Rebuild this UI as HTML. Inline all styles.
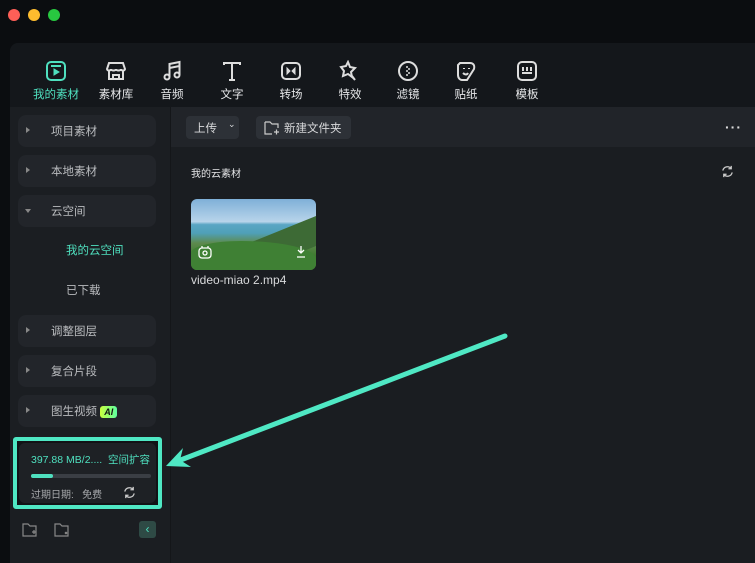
<!DOCTYPE html><html><head><meta charset="utf-8"><style>
*{margin:0;padding:0;box-sizing:border-box}
body{width:755px;height:546px;overflow:hidden;background:#0b0d10;font-family:"Liberation Sans","Noto Sans CJK SC",sans-serif;position:relative;color:#c8cacd}
.dot{position:absolute;top:9px;width:12px;height:12px;border-radius:50%}
.panel{position:absolute;left:10px;top:43px;width:760px;height:520px;background:#16191d;border-radius:8px 0 0 0;overflow:hidden}
.tb{position:absolute;top:0;left:0;right:0;height:64px;background:#14171b}
.tab{position:absolute;top:17px;width:50px;text-align:center;font-size:11.5px;color:#e6e7e9}
.tab svg{display:block;margin:0 auto 4px;width:22px;height:22px}
.side{position:absolute;left:0;top:64px;width:160px;bottom:0;background:#1b1e22}
.item{position:absolute;left:8px;width:138px;height:32px;background:#22252a;border-radius:8px;font-size:11.5px;color:#b9bbbe}
.item span{position:absolute;left:33px;top:8px}
.item i{position:absolute;left:8px;top:12px;border-left:4px solid #888;border-top:3px solid transparent;border-bottom:3px solid transparent}
.main{position:absolute;left:160px;top:64px;right:0;bottom:0;background:#1a1d21;border-left:1px solid #141619}
.bar{position:absolute;top:0;left:0;right:0;height:40px;background:#212429}
.btn{position:absolute;top:9px;height:23px;background:#2d3137;border-radius:4px;font-size:11.5px;color:#d8d9db}
</style></head><body>
<div class="dot" style="left:8px;background:#fe5f57"></div>
<div class="dot" style="left:28px;background:#febc2e"></div>
<div class="dot" style="left:48px;background:#28c840"></div>
<div class="panel">
<div class="tb">
<div class="tab" style="left:21px;color:#4fe0bf"><svg viewBox="0 0 22 22" fill="none" stroke="#4fe0bf" stroke-width="2"><rect x="2" y="2" width="18" height="18" rx="4"/><path d="M6 6h10"/><path d="M9 9v6l5-3z" fill="#4fe0bf" stroke-width="1"/></svg>我的素材</div>
<div class="tab" style="left:81px"><svg viewBox="0 0 22 22" fill="none" stroke="#ddd" stroke-width="2"><path d="M4 3h14l2 6c0 2-4 2-4 0 0 2-5 2-5 0 0 2-5 2-5 0 0 2-4 2-4 0z"/><path d="M4 11v8h14v-8M8 19v-4h6v4"/></svg>素材库</div>
<div class="tab" style="left:137px"><svg viewBox="0 0 22 22" fill="none" stroke="#ddd" stroke-width="2"><circle cx="6" cy="17" r="2.5"/><circle cx="16" cy="15" r="2.5"/><path d="M8.5 17V4l10-2v13M8.5 8l10-2"/></svg>音频</div>
<div class="tab" style="left:197px"><svg viewBox="0 0 22 22" fill="none" stroke="#ddd" stroke-width="2"><path d="M3 5V3h16v2M11 3v17M8 20h6"/></svg>文字</div>
<div class="tab" style="left:256px"><svg viewBox="0 0 22 22" fill="none" stroke="#ddd" stroke-width="2"><rect x="2" y="3" width="18" height="16" rx="4"/><path d="M7 8l3 3-3 3zM15 8l-3 3 3 3z" fill="#ddd" stroke-width="1"/></svg>转场</div>
<div class="tab" style="left:315px"><svg viewBox="0 0 22 22" fill="none" stroke="#ddd" stroke-width="2"><path d="M9 2l2 5 5 1-4 4 1 5-4-3-5 2 1-5-3-4 5-1z"/><path d="M13 16l3 4"/></svg>特效</div>
<div class="tab" style="left:373px"><svg viewBox="0 0 22 22" fill="none" stroke="#ddd" stroke-width="2"><circle cx="11" cy="11" r="9"/><path d="M9 7h2M11 9h2M9 11h2M11 13h2M9 15h2" stroke-width="1.5"/></svg>滤镜</div>
<div class="tab" style="left:431px"><svg viewBox="0 0 22 22" fill="none" stroke="#ddd" stroke-width="2"><path d="M5 3h10c3 0 5 2 4 6l-7 11H7c-2 0-4-2-4-5V5z"/><path d="M8 13c2 2 4 2 5 0M9 8v1M14 8v1"/></svg>贴纸</div>
<div class="tab" style="left:492px"><svg viewBox="0 0 22 22" fill="none" stroke="#ddd" stroke-width="2"><rect x="2" y="2" width="18" height="18" rx="4"/><path d="M6 13h10M7 7v4M11 7v4M15 7v4"/></svg>模板</div>
</div>
<div class="side">
<div class="item" style="top:8px"><i></i><span>项目素材</span></div>
<div class="item" style="top:48px"><i></i><span>本地素材</span></div>
<div class="item" style="top:88px"><i style="border-left:3px solid transparent;border-right:3px solid transparent;border-top:4px solid #888;border-bottom:0;left:7px;top:14px"></i><span>云空间</span></div>
<div style="position:absolute;left:56px;top:135px;font-size:11.5px;color:#4fe0bf">我的云空间</div>
<div style="position:absolute;left:56px;top:175px;font-size:11.5px;color:#b9bbbe">已下载</div>
<div class="item" style="top:208px"><i></i><span>调整图层</span></div>
<div class="item" style="top:248px"><i></i><span>复合片段</span></div>
<div class="item" style="top:288px"><i></i><span>图生视频 <b style="display:inline-block;background:linear-gradient(90deg,#c9ff3d,#5dffa0);color:#111;font-size:9px;font-style:italic;padding:0 4px;border-radius:3px;line-height:12px">AI</b></span></div>
<div style="position:absolute;left:3px;top:330px;width:149px;height:72px;border:4px solid #4fe8c4;border-radius:3px;background:#111316">
<div style="position:absolute;left:2px;top:2px;right:2px;bottom:2px;background:#1e2125;border-radius:6px"></div>
<div style="position:absolute;left:14px;top:11px;font-size:10.5px;color:#4fe0bf;white-space:nowrap">397.88 MB/2....&nbsp; 空间扩容</div>
<div style="position:absolute;left:14px;top:33px;width:120px;height:4px;background:#3a3e44;border-radius:2px"><div style="width:22px;height:4px;background:#4fe0bf;border-radius:2px"></div></div>
<div style="position:absolute;left:14px;top:45px;font-size:10px;color:#a8aaad">过期日期:&nbsp;&nbsp; 免费</div>
<svg style="position:absolute;left:106px;top:45px" width="13" height="13" viewBox="0 0 14 14" fill="none" stroke="#ccc" stroke-width="1.4"><path d="M2 6a5 5 0 0 1 9-2M12 8a5 5 0 0 1-9 2M11 1v3H8M3 13v-3h3"/></svg>
</div>
<svg style="position:absolute;left:12px;top:416px" width="16" height="14" fill="none" stroke="#888" stroke-width="1.2"><path d="M1 1h5l2 2h6v10H1z M10 9h4M12 7v4"/></svg>
<svg style="position:absolute;left:44px;top:416px" width="16" height="14" fill="none" stroke="#888" stroke-width="1.2"><path d="M1 1h5l2 2h6v10H1z M11 9l2 2M13 9l-2 2"/></svg>
<div style="position:absolute;left:129px;top:414px;width:17px;height:17px;background:#2e4a45;border-radius:3px;color:#4fe0bf;font-size:12px;text-align:center;line-height:17px">‹</div>
</div>
<div class="main">
<div class="bar">
<div class="btn" style="left:15px;width:53px"><span style="position:absolute;left:8px;top:4px">上传</span><span style="position:absolute;left:42px;top:3px;font-size:9px">⌄</span></div>
<div class="btn" style="left:85px;width:95px"><svg style="position:absolute;left:8px;top:5px" width="16" height="14" fill="none" stroke="#ccc" stroke-width="1.2"><path d="M1 1h5l2 2h6v4M8 13H1V1M10 11h5M12.5 8.5v5"/></svg><span style="position:absolute;left:28px;top:4px">新建文件夹</span></div>
<div style="position:absolute;right:28px;top:12px;color:#ddd;font-size:14px;letter-spacing:1px;font-weight:bold">···</div>
</div>
<div style="position:absolute;left:20px;top:58px;font-size:10px;color:#e4e5e7">我的云素材</div>
<svg style="position:absolute;left:550px;top:58px" width="13" height="13" viewBox="0 0 14 14" fill="none" stroke="#ccc" stroke-width="1.4"><path d="M2 6a5 5 0 0 1 9-2M12 8a5 5 0 0 1-9 2M11 1v3H8M3 13v-3h3"/></svg>
<div style="position:absolute;left:20px;top:92px;width:125px;height:71px;border-radius:6px;overflow:hidden;background:linear-gradient(180deg,#7fb0d8 0%,#b8d4ea 32%,#5aa6c4 36%,#4fa0b8 48%,#5d8a4e 62%,#3f7a2f 80%,#4c8a36 100%)">
<div style="position:absolute;left:40px;top:15px;width:90px;height:30px;background:#3d6a35;transform:skewY(-22deg);transform-origin:right top;border-radius:10px 0 0 0"></div>
<div style="position:absolute;left:0;top:42px;width:125px;height:30px;background:#3f8034;border-radius:40% 60% 0 0"></div>
<svg style="position:absolute;left:7px;top:46px" width="14" height="14" fill="none" stroke="#fff" stroke-width="1.3"><rect x="1" y="3" width="12" height="10" rx="3"/><circle cx="7" cy="8" r="2"/><path d="M4 3V1M10 3V1"/></svg>
<svg style="position:absolute;left:104px;top:46px" width="12" height="14" fill="none" stroke="#fff" stroke-width="1.3"><path d="M6 1v7M3 5l3 3 3-3M2 12h8"/></svg>
</div>
<div style="position:absolute;left:20px;top:166px;font-size:12px;color:#d8d9db">video-miao 2.mp4</div>
</div>
</div>
<svg style="position:absolute;left:0;top:0" width="755" height="546"><path d="M505 336L178 461" stroke="#4fe8c4" stroke-width="5" stroke-linecap="round"/><path d="M166 466L183 448 180 460 191 467z" fill="#4fe8c4"/></svg>
</body></html>
